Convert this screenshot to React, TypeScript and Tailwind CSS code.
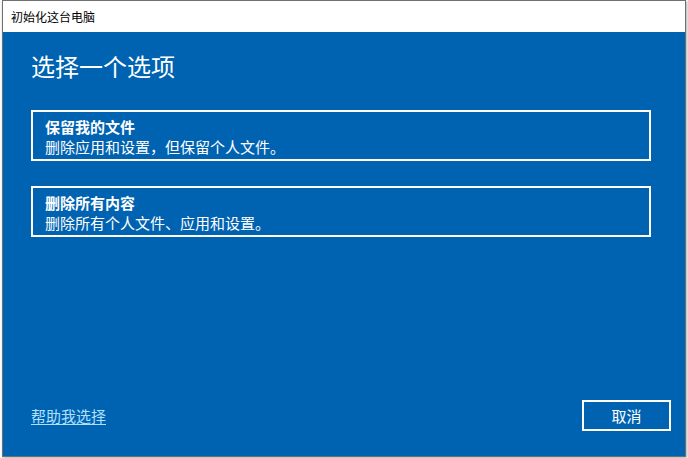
const font = { fontFamily: '"Noto Sans CJK SC", "Microsoft YaHei", sans-serif' };

function OptionCard({ title, desc }: { title: string; desc: string }) {
  return (
    <div className="w-[620px] h-[51px] border-2 border-white pl-[12px] pt-[5px] text-white">
      <div className="text-[15px] leading-[20px] font-bold">{title}</div>
      <div className="text-[15px] leading-[20px]">{desc}</div>
    </div>
  );
}

export default function App() {
  return (
    <div className="relative w-[688px] h-[458px] bg-white overflow-hidden" style={font}>
      {/* desktop behind: just a sliver of white on the left */}
      <div className="absolute left-[2px] top-0 w-[684px] h-[457px] border border-[#707070] shadow-[1px_1px_3px_rgba(0,0,0,0.35)] flex flex-col">
        {/* title bar */}
        <div className="h-[31px] bg-white flex items-center pl-[8px] text-[12px] text-black">
          初始化这台电脑
        </div>

        {/* content */}
        <div className="flex-1 bg-[#0063b1] flex flex-col pl-[28px] pr-[14px] pb-[25px]">
          <h1 className="mt-[18px] text-[24px] leading-[32px] font-normal text-white">选择一个选项</h1>

          <div className="mt-[28px] flex flex-col gap-[25px]">
            <OptionCard title="保留我的文件" desc="删除应用和设置，但保留个人文件。" />
            <OptionCard title="删除所有内容" desc="删除所有个人文件、应用和设置。" />
          </div>

          <div className="mt-auto flex items-center justify-between">
            <a className="text-[15px] leading-[20px] text-[#b0e0ff] underline underline-offset-2">帮助我选择</a>
            <button className="w-[89px] h-[31px] border-2 border-white text-white text-[15px] leading-[20px]">
              取消
            </button>
          </div>
        </div>
      </div>
    </div>
  );
}
